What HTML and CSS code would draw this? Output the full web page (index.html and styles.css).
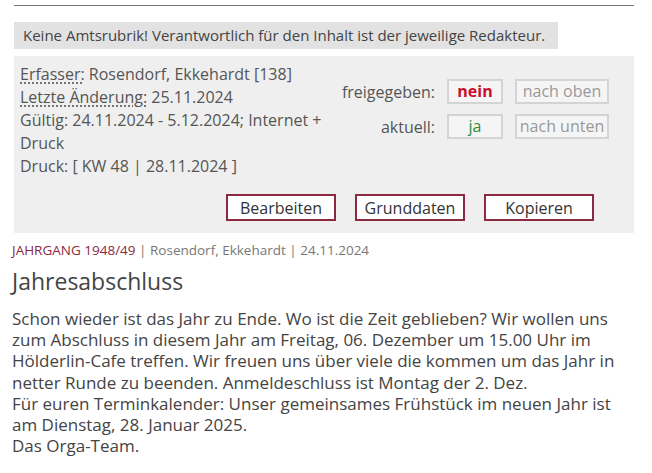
FILE: index.html
```html
<!DOCTYPE html>
<html lang="de">
<head>
    <meta charset="UTF-8">
    <meta name="viewport" content="width=device-width, initial-scale=1.0">
    <title>Jahresabschluss</title>
    <link rel="stylesheet" href="styles.css">
</head>
<body>
    <div class="page">
        <hr class="topline">
        <div class="notice">Keine Amtsrubrik! Verantwortlich für den Inhalt ist der jeweilige Redakteur.</div>

        <div class="panel">
            <div class="panel-top">
                <div class="info">
                    <div><abbr title="Erfasser">Erfasser:</abbr> Rosendorf, Ekkehardt [138]</div>
                    <div><abbr title="Letzte Änderung">Letzte Änderung:</abbr> 25.11.2024</div>
                    <div>Gültig: 24.11.2024 - 5.12.2024; Internet + Druck</div>
                    <div>Druck: [ KW 48 | 28.11.2024 ]</div>
                </div>
                <div class="status">
                    <div class="status-row">
                        <span class="status-label">freigegeben:</span>
                        <span class="flag no">nein</span>
                        <span class="move">nach oben</span>
                    </div>
                    <div class="status-row">
                        <span class="status-label">aktuell:</span>
                        <span class="flag yes">ja</span>
                        <span class="move">nach unten</span>
                    </div>
                </div>
            </div>
            <div class="actions">
                <button class="btn">Bearbeiten</button>
                <button class="btn">Grunddaten</button>
                <button class="btn">Kopieren</button>
            </div>
        </div>

        <div class="meta"><span class="rubrik">JAHRGANG 1948/49</span> | Rosendorf, Ekkehardt | 24.11.2024</div>
        <h1>Jahresabschluss</h1>
        <p class="text">
            Schon wieder ist das Jahr zu Ende. Wo ist die Zeit geblieben? Wir wollen uns zum Abschluss in diesem Jahr am Freitag, 06. Dezember um 15.00 Uhr im Hölderlin-Cafe treffen. Wir freuen uns über viele die kommen um das Jahr in netter Runde zu beenden. Anmeldeschluss ist Montag der 2. Dez.<br>
            Für euren Terminkalender: Unser gemeinsames Frühstück im neuen Jahr ist am Dienstag, 28. Januar 2025.<br>
            Das Orga-Team.
        </p>
    </div>
</body>
</html>
```

FILE: styles.css
```css
body {
    margin: 0;
    font-family: 'Open Sans', sans-serif;
    color: #444;
    background: #fff;
}
.page {
    width: 620px;
    margin-left: 14px;
}
.topline {
    border: none;
    border-top: 1px solid #777;
    margin: 5px 0 0;
}
.notice {
    display: inline-block;
    margin-top: 16px;
    background: #e2e2e2;
    padding: 3px 13px 3px 9px;
    font-size: 15px;
    line-height: 21px;
    color: #444;
}
.panel {
    margin-top: 7px;
    background: #efefef;
    padding: 7px 0 12px 6px;
}
.panel-top {
    display: flex;
}
.info {
    width: 306px;
    font-size: 16px;
    line-height: 23px;
    color: #555;
}
abbr {
    text-decoration: underline dotted;
    text-underline-offset: 3px;
}
.status {
    padding-top: 16px;
    display: flex;
    flex-direction: column;
    gap: 10px;
}
.status-row {
    display: flex;
    align-items: center;
}
.status-label {
    width: 109px;
    text-align: right;
    margin-right: 12px;
    font-size: 16px;
    color: #555;
}
.flag, .move {
    box-sizing: border-box;
    height: 25px;
    line-height: 21px;
    border: 2px solid #d4d4d4;
    background: #f5f5f5;
    text-align: center;
    font-size: 16px;
    color: #999;
}
.flag {
    width: 56px;
    margin-right: 12px;
}
.move {
    width: 94px;
}
.flag.no {
    color: #c8102e;
    font-weight: bold;
}
.flag.yes {
    color: #2e8b3a;
}
.actions {
    display: flex;
    justify-content: flex-end;
    margin-top: 16px;
    padding-right: 40px;
}
.btn {
    width: 110px;
    height: 27px;
    margin-left: 19px;
    border: 2px solid #8b2943;
    background: #fff;
    font-family: 'Open Sans', sans-serif;
    font-size: 16px;
    color: #333;
    padding: 0;
}
.btn:first-child {
    margin-left: 0;
}
.meta {
    margin-top: 8px;
    font-size: 13.5px;
    color: #777;
    margin-left: -2px;
}
.rubrik {
    color: #8b2943;
}
h1 {
    margin: 6px 0 0 -2px;
    font-size: 23px;
    font-weight: normal;
    color: #444;
}
.text {
    margin: 11px 0 0 -2px;
    font-size: 17px;
    line-height: 21.2px;
    color: #444;
}
```
